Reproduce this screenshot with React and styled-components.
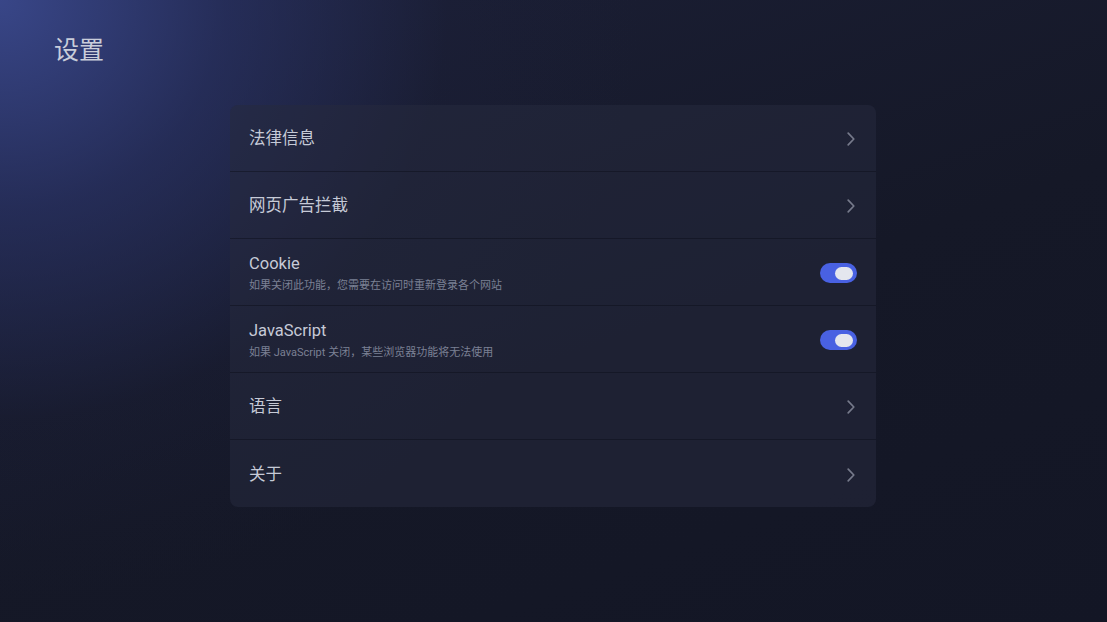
import React, { useState } from "react";
import styled, { createGlobalStyle } from "styled-components";

const GlobalStyle = createGlobalStyle`
  html, body {
    margin: 0;
    padding: 0;
    height: 100%;
  }
  body {
    font-family: Roboto, "Noto Sans CJK SC", "Noto Sans", sans-serif;
    background: #141827;
  }
  #root {
    height: 100%;
  }
`;

const Page = styled.div`
  box-sizing: border-box;
  width: 100%;
  height: 100vh;
  overflow: hidden;
  padding: 35px 54px 0;
  background:
    radial-gradient(ellipse 640px 600px at 0% 0%, rgba(58, 72, 140, 0.95) 0%, rgba(44, 54, 110, 0.62) 35%, rgba(30, 34, 64, 0.22) 70%, rgba(20, 24, 39, 0) 100%),
    linear-gradient(160deg, #1c2038 0%, #151827 55%, #131625 100%);
`;

const Title = styled.h1`
  margin: 0;
  font-size: 25px;
  line-height: 32px;
  font-weight: 400;
  color: #c9cdda;
`;

const Card = styled.div`
  width: 646px;
  margin: 38px 0 0 176px;
  border-radius: 8px;
  overflow: hidden;
  background: rgba(38, 42, 62, 0.55);
`;

const Row = styled.div`
  box-sizing: border-box;
  height: 67px;
  display: flex;
  align-items: center;
  justify-content: space-between;
  padding: 2px 21px 0 19px;
  border-bottom: 1px solid rgba(12, 14, 24, 0.45);

  &:last-child {
    border-bottom: none;
  }
`;

const TextCol = styled.div`
  display: flex;
  flex-direction: column;
  gap: 3px;
`;

const Label = styled.div`
  font-size: 16.5px;
  line-height: 22px;
  color: #c6cad7;
`;

const Hint = styled.div`
  font-size: 11px;
  line-height: 15px;
  color: #7b8094;
`;

const Toggle = styled.button`
  width: 37px;
  height: 20px;
  margin-right: -2px;
  border: none;
  padding: 0 4px;
  border-radius: 10px;
  display: flex;
  align-items: center;
  justify-content: ${(p) => (p.$on ? "flex-end" : "flex-start")};
  background: ${(p) => (p.$on ? "#4961e2" : "#3a3f52")};
  cursor: pointer;
`;

const Knob = styled.span`
  width: 18px;
  height: 13px;
  border-radius: 7px;
  background: #e4e6ee;
`;

const Chevron = () => (
  <svg width="8" height="14" viewBox="0 0 8 14" fill="none">
    <path d="M1.2 1.2 L6.8 7 L1.2 12.8" stroke="#767a8b" strokeWidth="1.7" strokeLinecap="round" strokeLinejoin="round" />
  </svg>
);

function Switch({ defaultOn }) {
  const [on, setOn] = useState(defaultOn);
  return (
    <Toggle $on={on} onClick={() => setOn(!on)}>
      <Knob />
    </Toggle>
  );
}

const items = [
  { label: "法律信息" },
  { label: "网页广告拦截" },
  { label: "Cookie", hint: "如果关闭此功能，您需要在访问时重新登录各个网站", toggle: true },
  { label: "JavaScript", hint: "如果 JavaScript 关闭，某些浏览器功能将无法使用", toggle: true },
  { label: "语言" },
  { label: "关于" },
];

export default function App() {
  return (
    <>
      <GlobalStyle />
      <Page>
        <Title>设置</Title>
        <Card>
          {items.map((item) => (
            <Row key={item.label}>
              <TextCol>
                <Label>{item.label}</Label>
                {item.hint && <Hint>{item.hint}</Hint>}
              </TextCol>
              {item.toggle ? <Switch defaultOn /> : <Chevron />}
            </Row>
          ))}
        </Card>
      </Page>
    </>
  );
}
